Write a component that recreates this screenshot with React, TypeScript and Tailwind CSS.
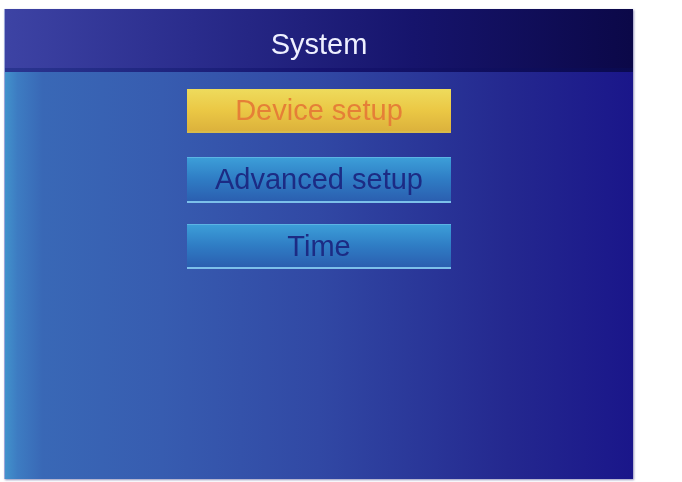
import React from "react";

const ITEMS = [
  { label: "Device setup", active: true, cls: "mt-[17px] h-[44px]" },
  { label: "Advanced setup", active: false, cls: "mt-[24px] h-[46px]" },
  { label: "Time", active: false, cls: "mt-[21px] h-[45px]" },
];

function MenuButton({
  label,
  active,
  cls,
}: {
  label: string;
  active: boolean;
  cls: string;
}) {
  if (active) {
    return (
      <div
        className={`${cls} flex w-[264px] items-center justify-center border-b-2 border-[#d8bb4a] bg-gradient-to-b from-[#eedb5c] via-[#ebc845] to-[#dcb23c]`}
      >
        <span className="text-[29px] leading-none text-[#e57f37] blur-[0.5px]">{label}</span>
      </div>
    );
  }
  return (
    <div
      className={`${cls} flex w-[264px] items-center justify-center border-t border-b-2 border-t-[#5cb4e4] border-b-[#7cc0ea] bg-gradient-to-b from-[#3c9ed8] via-[#2f7cc4] to-[#2b5fb0]`}
    >
      <span className="text-[29px] leading-none text-[#1c2b84] blur-[0.5px]">{label}</span>
    </div>
  );
}

export default function App() {
  return (
    <div
      className="h-[482px] w-[682px] bg-white pl-[4px] pt-[9px]"
      style={{ fontFamily: '"Liberation Sans", Arial, sans-serif' }}
    >
      <div className="flex h-[470px] w-[629px] flex-col overflow-hidden border-l border-[#9aa6d8] shadow-[1px_1px_2px_rgba(40,40,120,0.5)]">
        <header className="flex h-[59px] items-center justify-center bg-[linear-gradient(90deg,#3d43a4_0%,#2a2c8c_30%,#16146c_65%,#0b0848_100%)] pt-[12px]">
          <h1 className="text-[29px] leading-none text-[#eef0ff] blur-[0.4px]">System</h1>
        </header>
        <div className="h-[4px] bg-gradient-to-r from-[#2a3590] via-[#161470] to-[#0a0a50]" />
        <main className="flex flex-1 flex-col items-center bg-[linear-gradient(90deg,#4292cc_0%,#3d7cc2_2%,#3968b6_6%,#375cb0_25%,#3148a4_50%,#24288f_80%,#1a168a_100%)]">
          {ITEMS.map((it) => (
            <MenuButton key={it.label} label={it.label} active={it.active} cls={it.cls} />
          ))}
        </main>
      </div>
    </div>
  );
}
